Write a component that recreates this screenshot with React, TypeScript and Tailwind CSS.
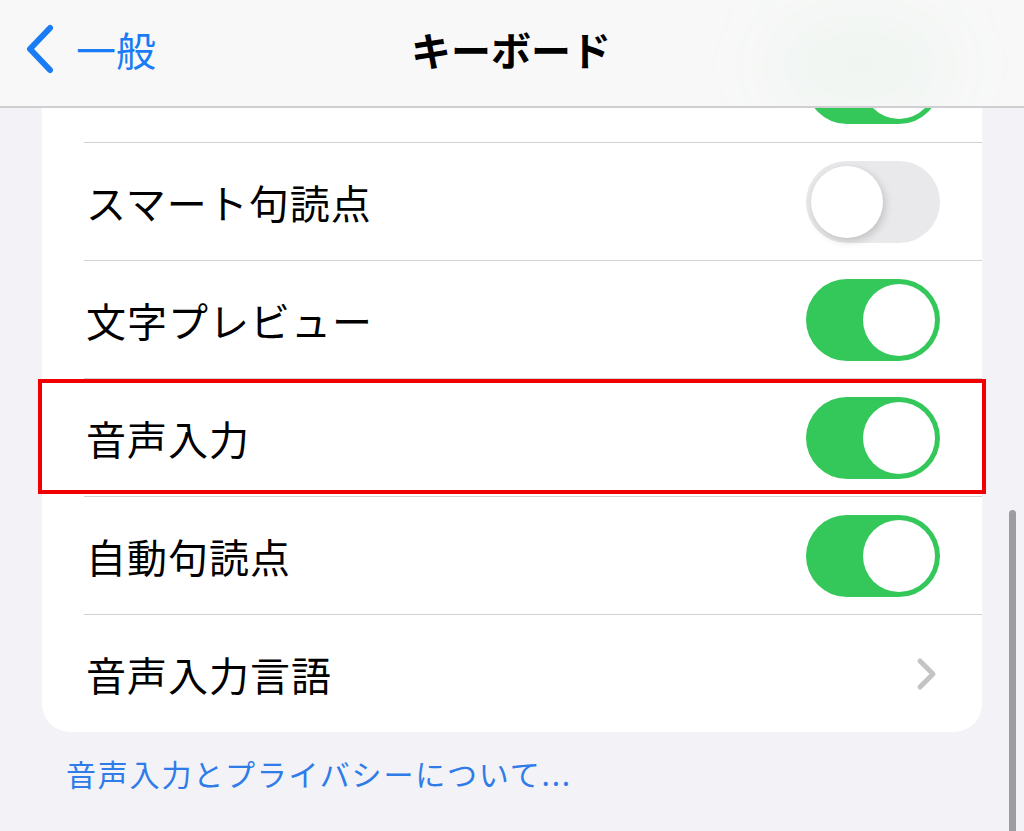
import React from "react";

const font = { fontFamily: '"Noto Sans CJK JP", "Noto Sans", sans-serif' };

function Toggle({ on }: { on: boolean }) {
  if (on) {
    return (
      <div className="w-[134px] h-[82px] rounded-full bg-[#34c759] flex items-center justify-end p-[5px] shrink-0">
        <div className="w-[72px] h-[72px] rounded-full bg-white" />
      </div>
    );
  }
  return (
    <div className="w-[134px] h-[82px] rounded-full bg-[#e9e9eb] flex items-center justify-start p-[5px] shrink-0">
      <div className="w-[72px] h-[72px] rounded-full bg-white shadow-[2px_3px_8px_rgba(0,0,0,0.18)]" />
    </div>
  );
}

function Row({ label, on, chevron, boxed }: { label: string; on?: boolean; chevron?: boolean; boxed?: boolean }) {
  return (
    <div className="relative">
      <div className="ml-[42px] h-px bg-[#d1d1d6]" />
      <div className="h-[117px] flex items-center justify-between pl-[44px] pr-[42px]">
        <span className="text-[40px] leading-none text-black tracking-[1px]">{label}</span>
        {chevron ? (
          <svg width="22" height="34" viewBox="0 0 22 34" className="mr-[2px]">
            <path d="M4 4 L17 17 L4 30" fill="none" stroke="#c4c4c7" strokeWidth="5" strokeLinecap="round" strokeLinejoin="round" />
          </svg>
        ) : (
          <Toggle on={!!on} />
        )}
      </div>
      {boxed && (
        <div className="absolute top-[1px] h-[115px] -left-[4px] -right-[4px] border-4 border-[#f00000]" />
      )}
    </div>
  );
}

export default function App() {
  return (
    <div className="relative w-[1024px] h-[831px] overflow-hidden bg-[#f2f2f7]" style={font}>
      {/* nav bar */}
      <div className="relative h-[108px] bg-[#f8f8f8] border-b-2 border-[#cfcfd1] flex items-center pb-[8px] overflow-hidden">
        <div className="absolute left-[770px] top-[20px] w-[180px] h-[90px] rounded-full bg-[#34c759]/5 blur-2xl" />
        <div className="flex items-center pl-[24px] gap-[20px] z-10">
          <svg width="32" height="50" viewBox="0 0 32 50">
            <path d="M26 4 L6 25 L26 46" fill="none" stroke="#1a7cf4" strokeWidth="6" strokeLinecap="round" strokeLinejoin="round" />
          </svg>
          <span className="text-[40px] leading-none text-[#1a7cf4]">一般</span>
        </div>
        <div className="absolute inset-0 flex items-center justify-center pb-[8px] z-10">
          <span className="text-[40px] leading-none font-bold text-black ml-[-2px]">キーボード</span>
        </div>
      </div>

      {/* card */}
      <div className="mx-[42px] bg-white rounded-b-[28px]">
        <div className="h-[34px] overflow-hidden flex justify-end pr-[42px]">
          <div className="-mt-[66px]">
            <Toggle on />
          </div>
        </div>
        <Row label="スマート句読点" on={false} />
        <Row label="文字プレビュー" on />
        <Row label="音声入力" on boxed />
        <Row label="自動句読点" on />
        <Row label="音声入力言語" chevron />
      </div>

      <div className="pl-[66px] pt-[26px]">
        <span className="text-[30px] leading-none text-[#2f7ce8] tracking-[1.8px]">音声入力とプライバシーについて...</span>
      </div>

      {/* scroll indicator */}
      <div className="absolute left-[1009px] top-[510px] w-[7px] h-[340px] rounded-full bg-[#9d9d9f]" />
    </div>
  );
}
